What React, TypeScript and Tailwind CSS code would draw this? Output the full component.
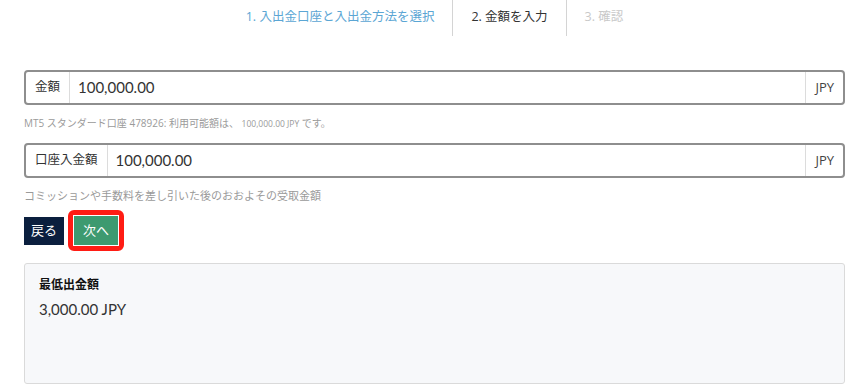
import React from "react";

const FONT = { fontFamily: '"Open Sans", "Noto Sans CJK JP", sans-serif' };
const NUM = { fontFamily: 'Lato, "Noto Sans CJK JP", sans-serif' };

const STEPS = [
  { label: "1. 入出金口座と入出金方法を選択", cls: "text-[#5ba6d4]" },
  { label: "2. 金額を入力", cls: "text-[#333]" },
  { label: "3. 確認", cls: "text-[#c9c9c9]" },
];

function AmountInput({ label, value }: { label: string; value: string }) {
  return (
    <div className="flex h-[35px] items-stretch rounded-[4px] border-2 border-[#8e8e8e] bg-white">
      <div className="flex items-center border-r border-[#dcdcdc] pl-[9px] pr-[9px] text-[12.5px] text-[#333]">
        {label}
      </div>
      <div className="flex flex-1 items-center pl-[8px] text-[15px] text-[#333]" style={NUM}>
        {value}
      </div>
      <div className="flex items-center border-l border-[#dcdcdc] px-[9px] text-[13px] text-[#444]">
        JPY
      </div>
    </div>
  );
}

export default function App() {
  return (
    <div className="min-h-[388px] w-[854px] bg-white" style={FONT}>
      <div className="ml-[24px] w-[821px]">
        {/* Steps */}
        <div className="flex h-[36px] justify-center">
          {STEPS.map((s, i) => (
            <div key={i} className="flex">
              {i > 0 && <div className="w-px bg-[#d4d4d4]" />}
              <div className={`flex items-center px-[18px] pb-[2px] text-[12.5px] ${s.cls}`}>{s.label}</div>
            </div>
          ))}
        </div>

        {/* Amount */}
        <div className="mt-[34px]">
          <AmountInput label="金額" value="100,000.00" />
        </div>
        <p className="mt-[12px] text-[10px] leading-[12px] text-[#9a9a9a]">
          MT5 スタンダード口座 478926: 利用可能額は、{" "}
          <span className="text-[8.5px]">100,000.00 JPY</span> です。
        </p>

        <div className="mt-[13px]">
          <AmountInput label="口座入金額" value="100,000.00" />
        </div>
        <p className="mt-[11px] text-[11px] leading-[14px] text-[#9a9a9a]">
          コミッションや手数料を差し引いた後のおおよその受取金額
        </p>

        {/* Buttons */}
        <div className="mt-[7px] flex items-center">
          <button className="flex h-[28px] w-[40px] items-center justify-center bg-[#0b1f3e] text-[13px] text-white">
            戻る
          </button>
          <div className="ml-[4px] rounded-[6px] border-[5px] border-[#ff1c14]">
            <button className="flex h-[31px] w-[46px] items-center justify-center border border-white bg-[#3d9a70] text-[13px] text-white">
              次へ
            </button>
          </div>
        </div>

        {/* Minimum */}
        <div className="mt-[12px] h-[121px] rounded-[3px] border border-[#dadada] bg-[#f7f8fa] pl-[14px] pt-[12px]">
          <div className="text-[12px] font-bold leading-[17px] text-[#111]">最低出金額</div>
          <div className="mt-[7px] text-[15px] leading-[18px] text-[#333]" style={NUM}>
            3,000.00 JPY
          </div>
        </div>
      </div>
    </div>
  );
}
